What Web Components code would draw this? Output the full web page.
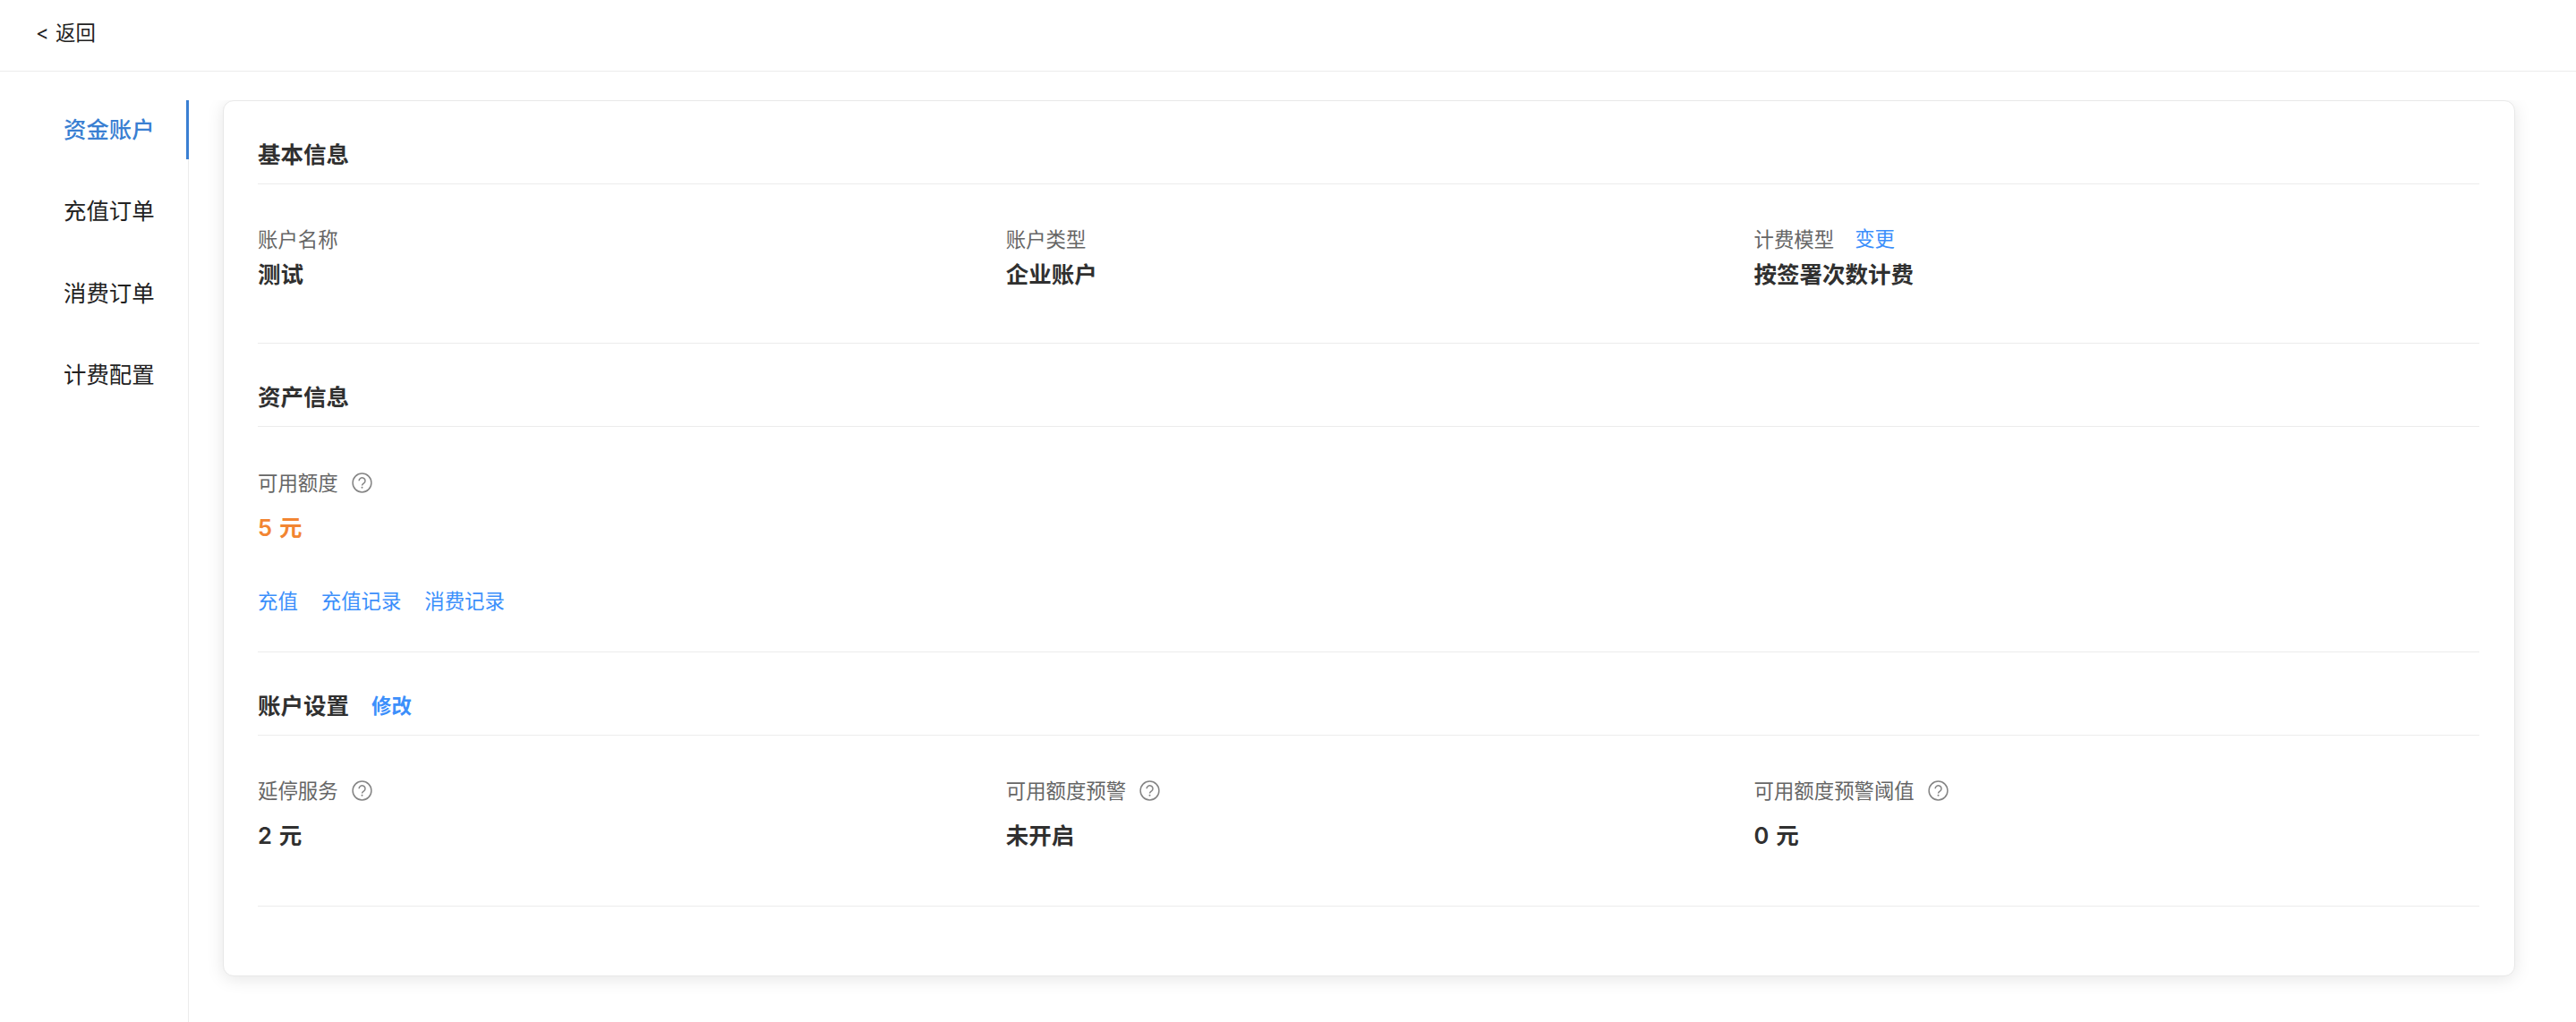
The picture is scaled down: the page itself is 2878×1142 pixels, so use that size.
<!DOCTYPE html>
<html lang="zh-CN">
<head>
<meta charset="UTF-8">
<title>资金账户</title>
<style>
    body {
        margin: 0;
        background: #fff;
        color: #222;
        font-family: Inter, "Noto Sans CJK SC", sans-serif;
        font-size: 22.4px;
        --line: #ececec;
        --link: #3c8ffb;
        --active: #3a7fd2;
        --title: #303030;
        --label: #666;
    }
</style>
</head>
<body>
<account-page>
    <page-header slot="header">&lt; 返回</page-header>
    <side-menu slot="menu">
        <menu-entry active>资金账户</menu-entry>
        <menu-entry>充值订单</menu-entry>
        <menu-entry>消费订单</menu-entry>
        <menu-entry>计费配置</menu-entry>
    </side-menu>
    <account-card>
        <card-section heading="基本信息" style="--body-height: 177px; --value-gap: 4px">
            <info-field>
                <span slot="label">账户名称</span>
                测试
            </info-field>
            <info-field>
                <span slot="label">账户类型</span>
                企业账户
            </info-field>
            <info-field>
                <span slot="label">计费模型</span>
                <text-link slot="extra">变更</text-link>
                按签署次数计费
            </info-field>
        </card-section>
        <card-section heading="资产信息" style="--body-height: 251px; --body-top: 47px">
            <info-field accent>
                <span slot="label">可用额度</span>
                <help-icon slot="extra"></help-icon>
                5 元
                <text-link slot="links">充值</text-link>
                <text-link slot="links">充值记录</text-link>
                <text-link slot="links">消费记录</text-link>
            </info-field>
        </card-section>
        <card-section heading="账户设置" style="--body-height: 190px">
            <text-link slot="action">修改</text-link>
            <info-field>
                <span slot="label">延停服务</span>
                <help-icon slot="extra"></help-icon>
                2 元
            </info-field>
            <info-field>
                <span slot="label">可用额度预警</span>
                <help-icon slot="extra"></help-icon>
                未开启
            </info-field>
            <info-field>
                <span slot="label">可用额度预警阈值</span>
                <help-icon slot="extra"></help-icon>
                0 元
            </info-field>
        </card-section>
    </account-card>
</account-page>

<script>
class AccountPage extends HTMLElement {
    constructor() {
        super();
        this.attachShadow({ mode: 'open' });
    }

    connectedCallback() {
        this.shadowRoot.innerHTML = `
        <style>
            :host {
                display: flex;
                flex-direction: column;
                height: 100vh;
                overflow: hidden;
            }

            .content {
                flex: 1;
                display: flex;
                padding-top: 32px;
            }

            main {
                flex: 1;
                padding: 0 68px 0 38px;
            }
        </style>
        <slot name="header"></slot>
        <div class="content">
            <slot name="menu"></slot>
            <main><slot></slot></main>
        </div>
        `;
    }
}

class PageHeader extends HTMLElement {
    constructor() {
        super();
        this.attachShadow({ mode: 'open' });
    }

    connectedCallback() {
        this.shadowRoot.innerHTML = `
        <style>
            :host {
                display: block;
                box-sizing: border-box;
                height: 80px;
                padding: 21px 0 0 40px;
                line-height: 32px;
                word-spacing: 1px;
                border-bottom: 1px solid var(--line);
            }
        </style>
        <slot></slot>
        `;
    }
}

class SideMenu extends HTMLElement {
    constructor() {
        super();
        this.attachShadow({ mode: 'open' });
    }

    connectedCallback() {
        this.shadowRoot.innerHTML = `
        <style>
            :host {
                display: flex;
                flex-direction: column;
                gap: 25.4px;
                box-sizing: border-box;
                width: 211px;
                /* drawn as a shadow so that the active bar can cover it */
                box-shadow: inset -1px 0 var(--line);
            }
        </style>
        <slot></slot>
        `;
    }
}

class MenuEntry extends HTMLElement {
    constructor() {
        super();
        this.attachShadow({ mode: 'open' });
    }

    connectedCallback() {
        this.shadowRoot.innerHTML = `
        <style>
            :host {
                display: block;
                padding-left: 71px;
                font-size: 25.4px;
                line-height: 66px;
                height: 66px;
                border-right: 3px solid transparent;
            }

            :host([active]) {
                color: var(--active);
                font-weight: 500;
                border-right-color: var(--active);
            }
        </style>
        <slot></slot>
        `;
    }
}

class AccountCard extends HTMLElement {
    constructor() {
        super();
        this.attachShadow({ mode: 'open' });
    }

    connectedCallback() {
        this.shadowRoot.innerHTML = `
        <style>
            :host {
                display: block;
                box-sizing: border-box;
                height: 979px;
                padding: 0 39px 0 38px;
                background: #fff;
                border: 1px solid #e8e8e8;
                border-radius: 12px;
                box-shadow: 0 3px 19px rgba(0, 0, 0, 0.1);
                clip-path: inset(0 -30px -30px -30px);
            }
        </style>
        <slot></slot>
        `;
    }
}

class CardSection extends HTMLElement {
    constructor() {
        super();
        this.attachShadow({ mode: 'open' });
    }

    connectedCallback() {
        this.shadowRoot.innerHTML = `
        <style>
            :host {
                display: block;
            }

            header {
                display: flex;
                align-items: center;
                gap: 25px;
                height: 40px;
                padding: 37px 0 15px;
                color: var(--title);
                font-weight: 600;
                border-bottom: 1px solid var(--line);
            }

            h2 {
                margin: 0;
                font-size: 25.5px;
                font-weight: 600;
            }

            ::slotted(text-link) {
                margin-top: 6px;
            }

            .fields {
                display: grid;
                grid-template-columns: repeat(3, 1fr);
                column-gap: 25.4px;
                align-items: start;
                box-sizing: border-box;
                height: calc(var(--body-height) + 1px);
                padding-top: var(--body-top, 46px);
                border-bottom: 1px solid var(--line);
            }
        </style>
        <header>
            <h2>${this.getAttribute('heading')}</h2>
            <slot name="action"></slot>
        </header>
        <div class="fields"><slot></slot></div>
        `;
    }
}

class InfoField extends HTMLElement {
    constructor() {
        super();
        this.attachShadow({ mode: 'open' });
    }

    connectedCallback() {
        this.shadowRoot.innerHTML = `
        <style>
            :host {
                display: block;
                white-space: nowrap;
            }

            .label {
                display: flex;
                align-items: center;
                height: 30px;
                color: var(--label);
            }

            ::slotted(span) {
                margin-bottom: 2px;
            }

            ::slotted(text-link[slot="extra"]) {
                margin-left: 23px;
            }

            ::slotted(help-icon) {
                margin-left: 15px;
            }

            .value {
                margin-top: calc(var(--value-gap, 15px) + 1px);
                height: 40px;
                line-height: 40px;
                font-size: 25.5px;
                font-weight: 600;
                word-spacing: 1.5px;
                color: var(--title);
            }

            :host([accent]) .value {
                color: #f28532;
            }

            .links {
                display: flex;
                gap: 26px;
                margin-top: 46px;
            }
        </style>
        <div class="label"><slot name="label"></slot><slot name="extra"></slot></div>
        <div class="value"><slot></slot></div>
        <div class="links"><slot name="links"></slot></div>
        `;
    }
}

class TextLink extends HTMLElement {
    constructor() {
        super();
        this.attachShadow({ mode: 'open' });
    }

    connectedCallback() {
        this.shadowRoot.innerHTML = `
        <style>
            :host {
                display: block;
                color: var(--link);
                line-height: 32px;
                cursor: pointer;
            }
        </style>
        <slot></slot>
        `;
    }
}

class HelpIcon extends HTMLElement {
    constructor() {
        super();
        this.attachShadow({ mode: 'open' });
    }

    connectedCallback() {
        this.shadowRoot.innerHTML = `
        <style>
            :host {
                display: block;
                width: 23px;
                height: 23px;
            }

            svg {
                display: block;
            }
        </style>
        <svg width="23" height="23" viewBox="0 0 23 23" fill="none" stroke="#858585" stroke-width="1.5">
            <circle cx="11.5" cy="11.5" r="10.4"/>
            <path d="M8.1 9.2a3.45 3.35 0 1 1 5.5 2.7c-1.2.8-2.1 1.2-2.1 2.7"/>
            <circle cx="11.5" cy="16.8" r="1" fill="#858585" stroke="none"/>
        </svg>
        `;
    }
}

customElements.define('account-page', AccountPage);
customElements.define('page-header', PageHeader);
customElements.define('side-menu', SideMenu);
customElements.define('menu-entry', MenuEntry);
customElements.define('account-card', AccountCard);
customElements.define('card-section', CardSection);
customElements.define('info-field', InfoField);
customElements.define('text-link', TextLink);
customElements.define('help-icon', HelpIcon);
</script>
</body>
</html>
